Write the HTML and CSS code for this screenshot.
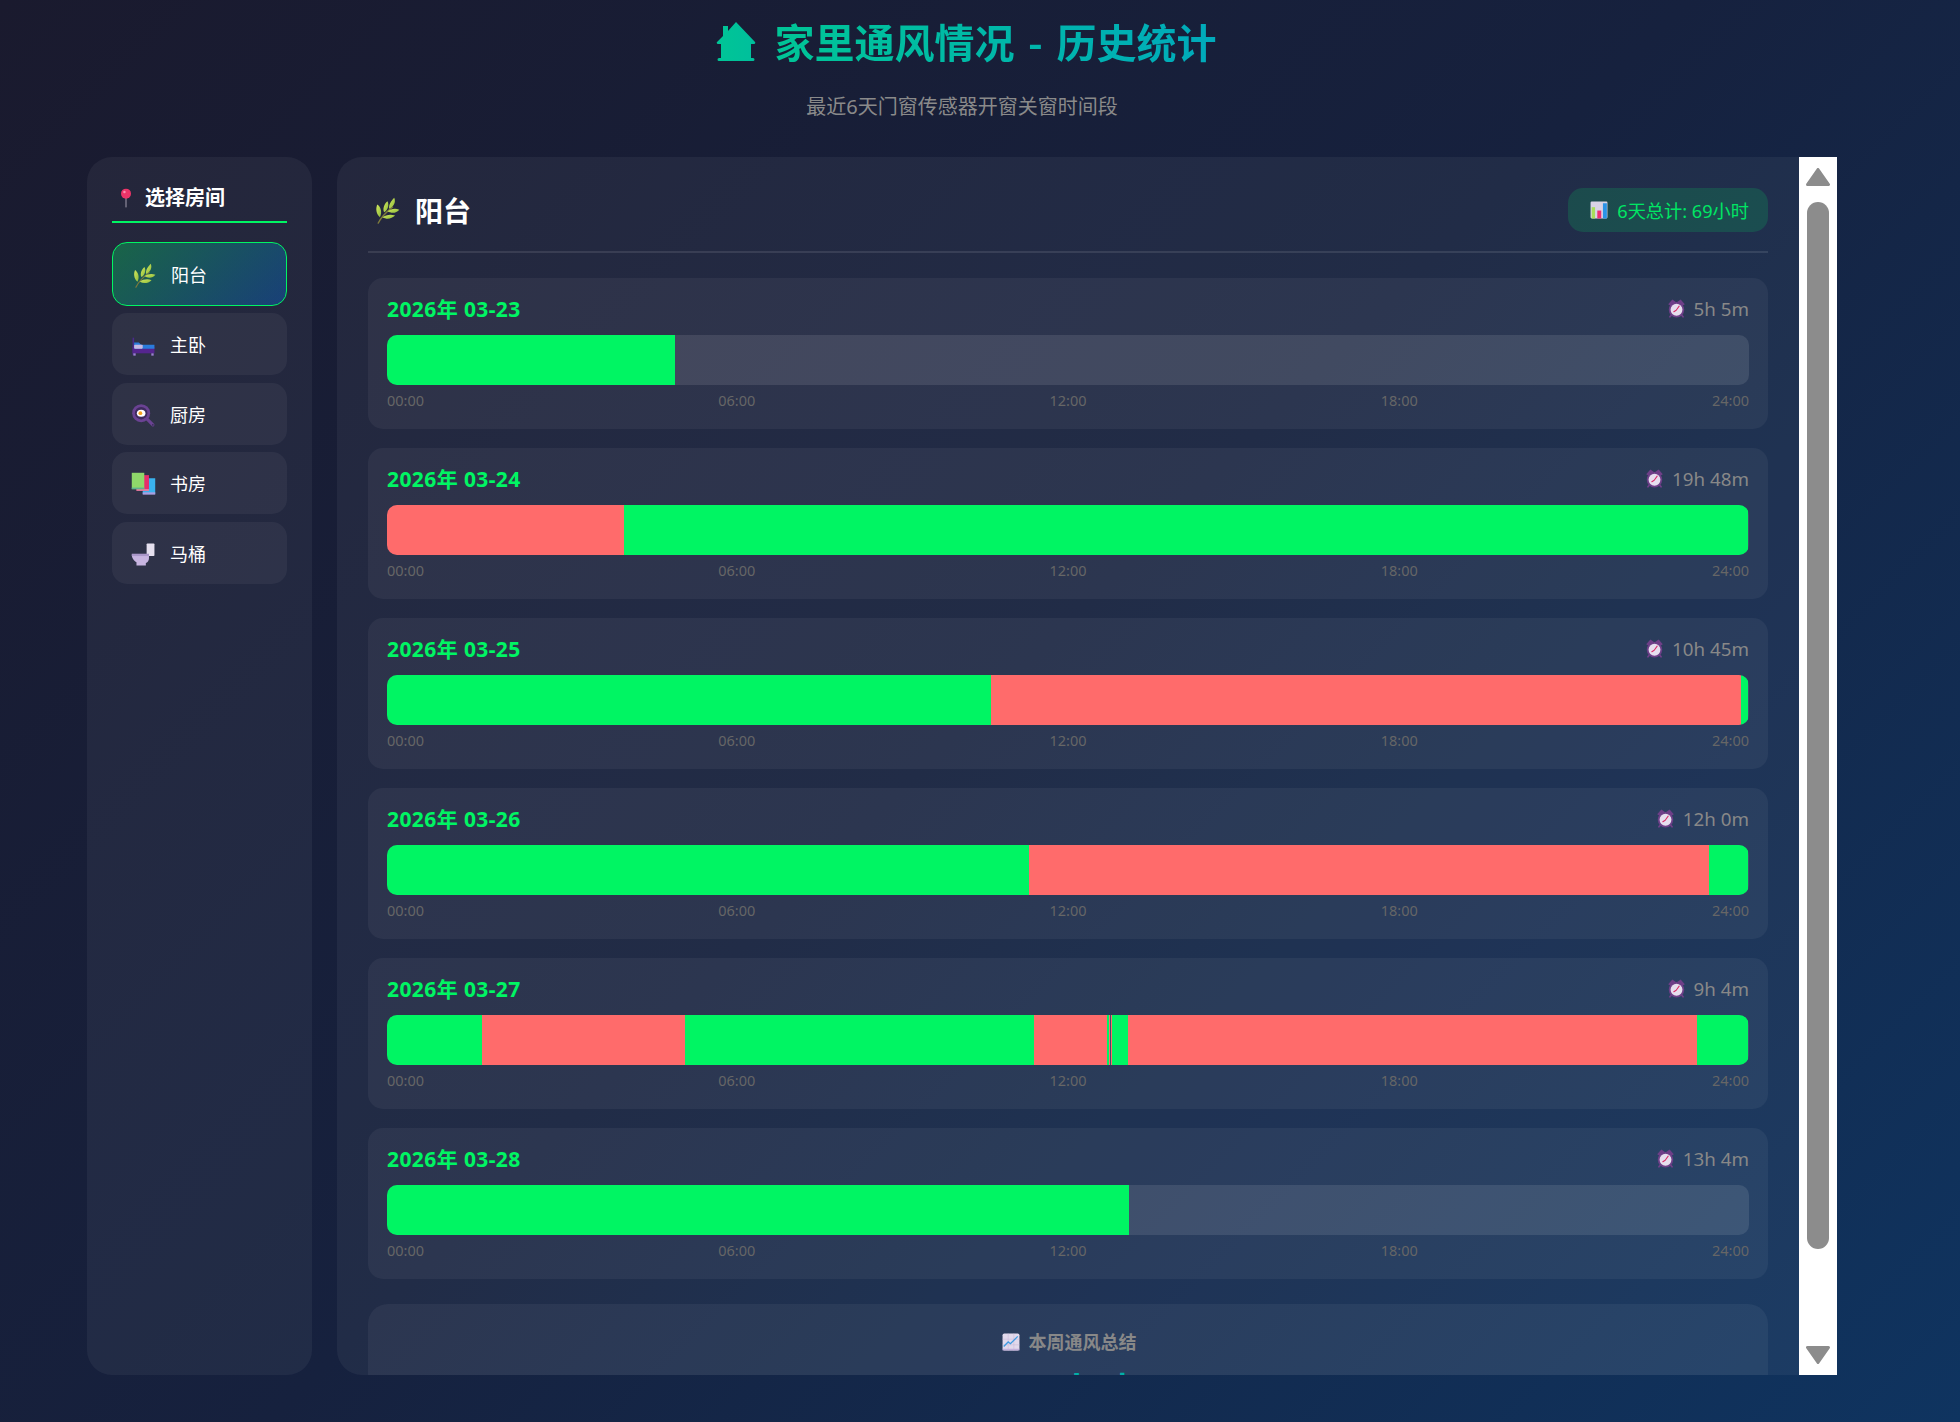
FILE: index.html
```html
<!DOCTYPE html>
<html lang="zh-CN">
<head>
<meta charset="utf-8">
<title>家里通风情况 - 历史统计</title>
<link rel="stylesheet" href="styles.css">
</head>
<body>
<svg class="defs" width="0" height="0" aria-hidden="true">
  <defs>
    <linearGradient id="leaf" x1="0" y1="0" x2="1" y2="1"><stop offset="0" stop-color="#d3e85e"/><stop offset="1" stop-color="#8dbb3a"/></linearGradient>
    <linearGradient id="house" x1="0" y1="0" x2="1" y2="0"><stop offset="0" stop-color="#00c596"/><stop offset="1" stop-color="#00bf9c"/></linearGradient>
    <symbol id="i-herb" viewBox="0 0 32 32">
      <path d="M5 31C8 25 13 19 22 12" fill="none" stroke="#7d7a3c" stroke-width="1.6" stroke-linecap="round"/>
      <path d="M7 24C2 20 2 13 4 9c4 3 6 9 3 15z" fill="url(#leaf)"/>
      <path d="M12 18C10 14 12 8 16 5c2 4 1 10-4 13z" fill="url(#leaf)"/>
      <path d="M18 14c-1-4 2-9 6-13 2 5 0 10-6 13z" fill="url(#leaf)"/>
      <path d="M16 17c4-3 9-4 14-2-3 4-9 5-14 2z" fill="url(#leaf)"/>
      <path d="M10 24c4-3 10-4 15-2-4 4-10 5-15 2z" fill="url(#leaf)"/>
    </symbol>
    <symbol id="i-bed" viewBox="0 0 32 32">
      <rect x="2" y="6" width="2" height="22" fill="#4a2a8a"/>
      <rect x="2" y="18" width="28" height="8" fill="#55258f"/>
      <rect x="3" y="26" width="3" height="3" fill="#9a7fd0"/>
      <rect x="26" y="26" width="3" height="3" fill="#9a7fd0"/>
      <path d="M4 12h6l3 3h17v5H4z" fill="#2a7bdc"/>
      <rect x="4" y="15" width="11" height="5" rx="1" fill="#c7b9e2"/>
    </symbol>
    <symbol id="i-pan" viewBox="0 0 32 32">
      <circle cx="13" cy="13" r="11.5" fill="#6a4293"/>
      <circle cx="13" cy="13" r="8" fill="#3e2a5e"/>
      <path d="M21 21l7 7" stroke="#6a4293" stroke-width="4" stroke-linecap="round"/>
      <circle cx="28" cy="28" r="1" fill="#2e2a48"/>
      <ellipse cx="13" cy="13" rx="5.5" ry="4.5" fill="#fff"/>
      <circle cx="12" cy="13" r="2.4" fill="#f7a21f"/>
    </symbol>
    <symbol id="i-books" viewBox="0 0 32 32">
      <rect x="15" y="8" width="16" height="20" fill="#3ab2ee"/>
      <rect x="15" y="26" width="16" height="3" fill="#a99ee0"/>
      <rect x="7" y="4" width="16" height="20" fill="#e62e6c"/>
      <rect x="7" y="22" width="16" height="2" fill="#e58cab"/>
      <rect x="1" y="1" width="16" height="21" fill="#8fd86a"/>
      <rect x="1" y="20" width="16" height="2" fill="#5db08f"/>
    </symbol>
    <symbol id="i-toilet" viewBox="0 0 32 32">
      <rect x="20" y="2" width="10" height="16" rx="1" fill="#e6e0ef"/>
      <path d="M1 16h22v5c0 3-2 5-4 6v3H7v-4c-3-2-6-5-6-10z" fill="#c7b4e0"/>
      <rect x="1" y="15" width="22" height="3" fill="#aa97c9"/>
    </symbol>
    <symbol id="i-pin" viewBox="0 0 32 32">
      <rect x="15" y="12" width="2" height="19" fill="#8a8496"/>
      <circle cx="16" cy="9" r="8" fill="#ee3468"/>
      <circle cx="13.5" cy="6.5" r="2" fill="#ff8fb0"/>
    </symbol>
    <symbol id="i-bars" viewBox="0 0 32 32">
      <rect x="1" y="1" width="30" height="30" rx="2" fill="#d9d3e6"/>
      <rect x="3" y="11" width="6" height="20" fill="#a8de5a"/>
      <rect x="13" y="17" width="7" height="14" fill="#ee2f72"/>
      <rect x="23" y="4" width="7" height="27" fill="#2b93e6"/>
    </symbol>
    <symbol id="i-clock" viewBox="0 0 32 32">
      <path d="M2 9L9 1l6 4-7 8zM30 9l-7-8-6 4 7 8z" fill="#6e3f88"/>
      <path d="M8 26l-3 4M24 26l3 4" stroke="#6e3f88" stroke-width="3" stroke-linecap="round"/>
      <circle cx="16" cy="18" r="13" fill="#6e3f88"/>
      <circle cx="16" cy="18" r="10" fill="#e6deee"/>
      <path d="M15.5 19l-4 2.5M15.5 19l5-7" stroke="#d92a66" stroke-width="1.7" stroke-linecap="round"/>
    </symbol>
    <symbol id="i-up" viewBox="0 0 32 32">
      <rect x="1" y="1" width="30" height="30" rx="3" fill="#e2d9ec"/>
      <path d="M1 11h30M1 21h30M11 1v30M21 1v30" stroke="#c9bcd9" stroke-width="1"/>
      <rect x="1" y="28" width="30" height="3" fill="#c4b2dc"/>
      <path d="M3 24l8-8 4 3L28 6" fill="none" stroke="#3f9be0" stroke-width="2.4"/>
    </symbol>
    <symbol id="i-house" viewBox="0 0 40 40">
      <path d="M20 1L39 21a1.2 1.2 0 0 1-1 2h-3v14h2a1.5 1.5 0 0 1 0 3H3a1.5 1.5 0 0 1 0-3h2V23H2a1.2 1.2 0 0 1-1-2l6-6V5h5v5z" fill="url(#house)"/>
    </symbol>
  </defs>
</svg>

<div class="page">
  <header class="top">
    <h1 class="page-title">
      <svg class="house"><use href="#i-house"/></svg>
      <span class="page-title-text">家里通风情况 - 历史统计</span>
    </h1>
    <p class="subtitle">最近6天门窗传感器开窗关窗时间段</p>
  </header>

  <div class="layout">
    <aside class="sidebar">
      <h2 class="side-title"><svg class="side-title-icon"><use href="#i-pin"/></svg>选择房间</h2>
      <ul class="rooms">
        <li class="room active"><svg class="room-icon"><use href="#i-herb"/></svg>阳台</li>
        <li class="room"><svg class="room-icon"><use href="#i-bed"/></svg>主卧</li>
        <li class="room"><svg class="room-icon"><use href="#i-pan"/></svg>厨房</li>
        <li class="room"><svg class="room-icon"><use href="#i-books"/></svg>书房</li>
        <li class="room"><svg class="room-icon"><use href="#i-toilet"/></svg>马桶</li>
      </ul>
    </aside>

    <main class="panel">
      <div class="panel-body">
        <div class="panel-head">
          <h2 class="room-title"><svg class="room-title-icon"><use href="#i-herb"/></svg>阳台</h2>
          <div class="total"><svg class="total-icon"><use href="#i-bars"/></svg>6天总计: 69小时</div>
        </div>

        <section class="day">
          <div class="day-head"><span class="date">2026年 03-23</span><span class="dur"><svg class="dur-icon"><use href="#i-clock"/></svg>5h 5m</span></div>
          <div class="bar"><i class="seg open" style="width:21.15%"></i></div>
          <div class="ticks"><span>00:00</span><span>06:00</span><span>12:00</span><span>18:00</span><span>24:00</span></div>
        </section>

        <section class="day">
          <div class="day-head"><span class="date">2026年 03-24</span><span class="dur"><svg class="dur-icon"><use href="#i-clock"/></svg>19h 48m</span></div>
          <div class="bar"><i class="seg closed" style="width:17.4%"></i><i class="seg open" style="width:82.53%"></i></div>
          <div class="ticks"><span>00:00</span><span>06:00</span><span>12:00</span><span>18:00</span><span>24:00</span></div>
        </section>

        <section class="day">
          <div class="day-head"><span class="date">2026年 03-25</span><span class="dur"><svg class="dur-icon"><use href="#i-clock"/></svg>10h 45m</span></div>
          <div class="bar"><i class="seg open" style="width:44.34%"></i><i class="seg closed" style="width:55.07%"></i><i class="seg open" style="width:0.52%"></i></div>
          <div class="ticks"><span>00:00</span><span>06:00</span><span>12:00</span><span>18:00</span><span>24:00</span></div>
        </section>

        <section class="day">
          <div class="day-head"><span class="date">2026年 03-26</span><span class="dur"><svg class="dur-icon"><use href="#i-clock"/></svg>12h 0m</span></div>
          <div class="bar"><i class="seg open" style="width:47.14%"></i><i class="seg closed" style="width:49.93%"></i><i class="seg open" style="width:2.86%"></i></div>
          <div class="ticks"><span>00:00</span><span>06:00</span><span>12:00</span><span>18:00</span><span>24:00</span></div>
        </section>

        <section class="day">
          <div class="day-head"><span class="date">2026年 03-27</span><span class="dur"><svg class="dur-icon"><use href="#i-clock"/></svg>9h 4m</span></div>
          <div class="bar"><i class="seg open" style="width:6.95%"></i><i class="seg closed" style="width:14.9%"></i><i class="seg open" style="width:25.65%"></i><i class="seg closed" style="width:5.36%"></i><i class="seg open" style="width:0.147%"></i><i class="seg closed" style="width:0.073%"></i><i class="seg" style="width:0.073%"></i><i class="seg closed" style="width:0.073%"></i><i class="seg open" style="width:1.175%"></i><i class="seg closed" style="width:41.75%"></i><i class="seg open" style="width:3.77%"></i></div>
          <div class="ticks"><span>00:00</span><span>06:00</span><span>12:00</span><span>18:00</span><span>24:00</span></div>
        </section>

        <section class="day">
          <div class="day-head"><span class="date">2026年 03-28</span><span class="dur"><svg class="dur-icon"><use href="#i-clock"/></svg>13h 4m</span></div>
          <div class="bar"><i class="seg open" style="width:54.5%"></i></div>
          <div class="ticks"><span>00:00</span><span>06:00</span><span>12:00</span><span>18:00</span><span>24:00</span></div>
        </section>

        <section class="summary">
          <h3 class="summary-title"><svg class="summary-icon"><use href="#i-up"/></svg>本周通风总结</h3>
          <div class="summary-value">69小时</div>
        </section>
      </div>

      <div class="scrollbar" aria-hidden="true">
        <svg class="arrow" viewBox="0 0 24 18"><path d="M12 1.5L22.5 16.5H1.5z" fill="#8c8c8c" stroke="#8c8c8c" stroke-width="3" stroke-linejoin="round"/></svg>
        <div class="thumb"></div>
        <svg class="arrow arrow-down" viewBox="0 0 24 18"><path d="M1.5 1.5H22.5L12 16.5z" fill="#8c8c8c" stroke="#8c8c8c" stroke-width="3" stroke-linejoin="round"/></svg>
      </div>
    </main>
  </div>
</div>
</body>
</html>
```

FILE: styles.css
```css
* { box-sizing: border-box; }

html, body {
  margin: 0;
  height: 100%;
  overflow: hidden;
}

body {
  background: linear-gradient(135deg, #1a1a2e 0%, #16213e 50%, #0f3460 100%);
  font-family: "Noto Sans", "Noto Sans CJK SC", sans-serif;
  color: #fff;
}

.defs { position: absolute; }

.page {
  height: 1422px;
  padding: 0 123px 0 87px;
  display: flex;
  flex-direction: column;
}

.top {
  height: 157px;
  display: flex;
  flex-direction: column;
  align-items: center;
}

.page-title {
  margin: 14px 0 0 8px;
  height: 54px;
  display: flex;
  align-items: center;
  gap: 19px;
  font-size: 40px;
  line-height: 54px;
  font-weight: 700;
  font-family: "Noto Sans CJK SC", sans-serif;
  word-spacing: 4.5px;
}

.page-title-text {
  background: linear-gradient(90deg, #00c596, #00aabb);
  -webkit-background-clip: text;
  background-clip: text;
  color: transparent;
}

.house { width: 40px; height: 40px; flex: none; }

.subtitle {
  margin: 26px 0 0;
  font-size: 20px;
  line-height: 26px;
  color: #8a8a8a;
}

.layout {
  flex: 1;
  min-height: 0;
  margin-bottom: 47px;
  display: flex;
  gap: 25px;
}

.sidebar {
  width: 225px;
  flex: none;
  padding: 25px;
  border-radius: 25px;
  background: rgba(255, 255, 255, 0.05);
}

.side-title {
  margin: 0 0 19px;
  height: 41px;
  padding: 0 0 7px 4px;
  display: flex;
  align-items: center;
  gap: 9px;
  border-bottom: 2px solid #00f563;
  font-size: 20px;
  line-height: 28px;
  font-weight: 700;
}

.side-title-icon { width: 20px; height: 20px; flex: none; }

.rooms {
  list-style: none;
  margin: 0;
  padding: 0;
  display: flex;
  flex-direction: column;
  gap: 7.5px;
}

.room {
  height: 62px;
  padding-left: 19px;
  display: flex;
  align-items: center;
  gap: 14px;
  border-radius: 15px;
  background: rgba(255, 255, 255, 0.05);
  font-size: 18px;
  color: #fff;
}

.room.active {
  height: 63.5px;
  border: 1.5px solid #00f563;
  background: linear-gradient(135deg, rgba(0, 245, 99, 0.3), rgba(0, 120, 255, 0.3));
}

.room-icon { width: 25px; height: 25px; margin-top: 3px; flex: none; }

.panel {
  flex: 1;
  min-width: 0;
  display: flex;
  border-radius: 25px 0 0 25px;
  background: rgba(255, 255, 255, 0.05);
  overflow: hidden;
}

.panel-body {
  flex: 1;
  min-width: 0;
  padding: 31px 31px 0;
  overflow: hidden;
}

.panel-head {
  height: 65px;
  padding-bottom: 19px;
  margin-bottom: 25px;
  display: flex;
  align-items: center;
  justify-content: space-between;
  border-bottom: 2px solid rgba(255, 255, 255, 0.1);
}

.room-title {
  margin: 0;
  padding: 1px 0 0 6px;
  display: flex;
  align-items: center;
  gap: 14px;
  font-size: 28px;
  line-height: 38px;
  font-weight: 700;
}

.room-title-icon { width: 27px; height: 27px; flex: none; }

.total {
  height: 44px;
  padding: 0 19px 0 22px;
  display: flex;
  align-items: center;
  gap: 9px;
  border-radius: 15px;
  background: rgba(0, 245, 99, 0.15);
  color: #00e664;
  font-size: 18.2px;
}

.total-icon { width: 18px; height: 18px; flex: none; }

.day {
  height: 151px;
  margin-bottom: 19px;
  padding: 14px 19px 0;
  border-radius: 15px;
  background: rgba(255, 255, 255, 0.05);
}

.day-head {
  height: 32px;
  margin-bottom: 11px;
  display: flex;
  align-items: center;
  justify-content: space-between;
}

.date {
  font-size: 21px;
  font-weight: 700;
  color: #00f563;
  letter-spacing: 0.4px;
}

.dur {
  display: flex;
  align-items: center;
  gap: 8px;
  font-size: 18.75px;
  color: #888;
}

.dur-icon { width: 19px; height: 19px; flex: none; }

.bar {
  height: 50px;
  display: flex;
  border-radius: 10px;
  overflow: hidden;
  background: rgba(255, 255, 255, 0.1);
}

.seg { display: block; height: 100%; }
.seg.open { background: #00f563; }
.seg.closed { background: #ff6b6b; }

.ticks {
  margin-top: 5px;
  display: flex;
  justify-content: space-between;
  font-size: 14.5px;
  line-height: 20px;
  color: #666;
}

.summary {
  margin-top: 25px;
  height: 120px;
  padding-top: 22px;
  border-radius: 20px;
  background: rgba(255, 255, 255, 0.05);
  text-align: center;
}

.summary-title {
  margin: 0;
  padding-left: 2px;
  display: flex;
  align-items: center;
  justify-content: center;
  gap: 9px;
  font-size: 18px;
  line-height: 32px;
  font-weight: 700;
  color: #888;
}

.summary-icon { width: 18px; height: 18px; flex: none; }

.summary-value {
  margin-top: 5px;
  padding-left: 12px;
  font-size: 35px;
  line-height: 54px;
  font-weight: 700;
  color: #00b0a8;
}

.scrollbar {
  width: 38px;
  flex: none;
  padding: 11px 7px;
  display: flex;
  flex-direction: column;
  align-items: center;
  background: #fff;
}

.arrow { width: 24px; height: 18px; flex: none; }
.arrow-down { margin-top: auto; }

.thumb {
  width: 22px;
  height: 1047px;
  margin-top: 16px;
  flex: none;
  border-radius: 11px;
  background: #8c8c8c;
}
```
